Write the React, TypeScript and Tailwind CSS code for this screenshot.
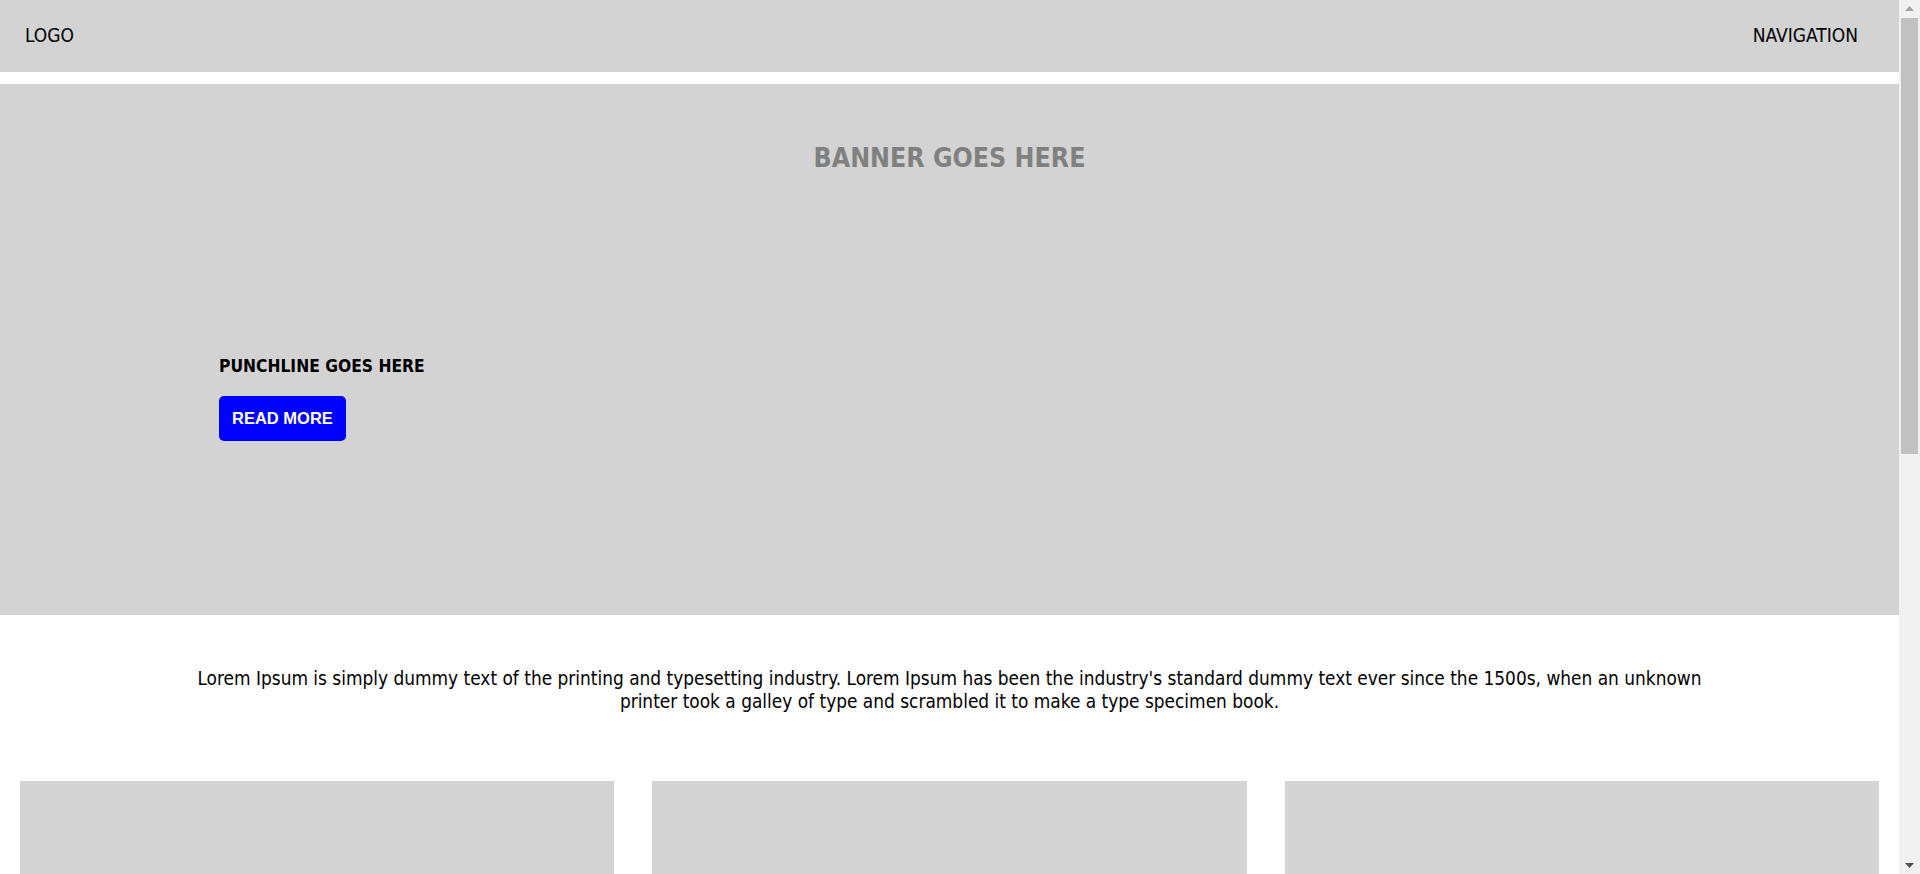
const font = "font-['Liberation_Sans_Narrow','DejaVu_Sans_Condensed','Liberation_Sans',sans-serif]";

/** Fake browser scrollbar, drawn because the headless page shows none */
function Scrollbar() {
  return (
    <aside className="sticky top-0 h-[874px] w-[21px] shrink-0 bg-[#f1f1f1] flex flex-col items-center">
      <div className="h-[17px] w-full flex items-center justify-center">
        <svg width="9" height="5" viewBox="0 0 9 5">
          <polygon points="4.5,0 9,5 0,5" fill="#a3a3a3" />
        </svg>
      </div>
      <div className="mt-[1px] h-[436px] w-[17px] bg-[#c1c1c1]" />
      <div className="flex-1" />
      <div className="h-[17px] w-full flex items-center justify-center">
        <svg width="9" height="5" viewBox="0 0 9 5">
          <polygon points="0,0 9,0 4.5,5" fill="#505050" />
        </svg>
      </div>
    </aside>
  );
}

export default function App() {
  return (
    <div className="flex items-start bg-white">
      <main className={`flex-1 min-h-[1684px] text-black ${font}`}>
        <header className="h-[72px] bg-[#d3d3d3] flex items-center justify-between pl-[25px] pr-[41px]">
          <div className="text-[19px] leading-none mt-[-2px]">LOGO</div>
          <nav className="text-[19px] leading-none mt-[-2px]">NAVIGATION</nav>
        </header>

        <section className="mt-[12px] h-[531px] bg-[#d3d3d3] flex flex-col">
          <h1 className="mt-[59px] text-center text-[26.5px] leading-[30px] font-bold text-[#808080]">
            BANNER GOES HERE
          </h1>
          <div className="mt-[181px] pl-[219px]">
            <h2 className="text-[17.3px] leading-[24px] font-bold">PUNCHLINE GOES HERE</h2>
            <button className="mt-[18px] h-[45px] px-[13px] rounded-[5px] bg-[#0000ff] text-white font-bold text-[16.5px] font-['Liberation_Sans',Arial,sans-serif]">
              READ MORE
            </button>
          </div>
        </section>

        <p className="mt-[52px] text-center text-[18.9px] leading-[23px] px-[120px]">
          Lorem Ipsum is simply dummy text of the printing and typesetting industry. Lorem Ipsum has been the industry's standard dummy text ever since the 1500s, when an unknown
          <br />
          printer took a galley of type and scrambled it to make a type specimen book.
        </p>

        <div className="mt-[68px] px-[20px] grid grid-cols-3 gap-[38px] pb-[40px]">
          <div className="h-[420px] bg-[#d3d3d3]" />
          <div className="h-[420px] bg-[#d3d3d3]" />
          <div className="h-[420px] bg-[#d3d3d3]" />
        </div>
      </main>
      <Scrollbar />
    </div>
  );
}
